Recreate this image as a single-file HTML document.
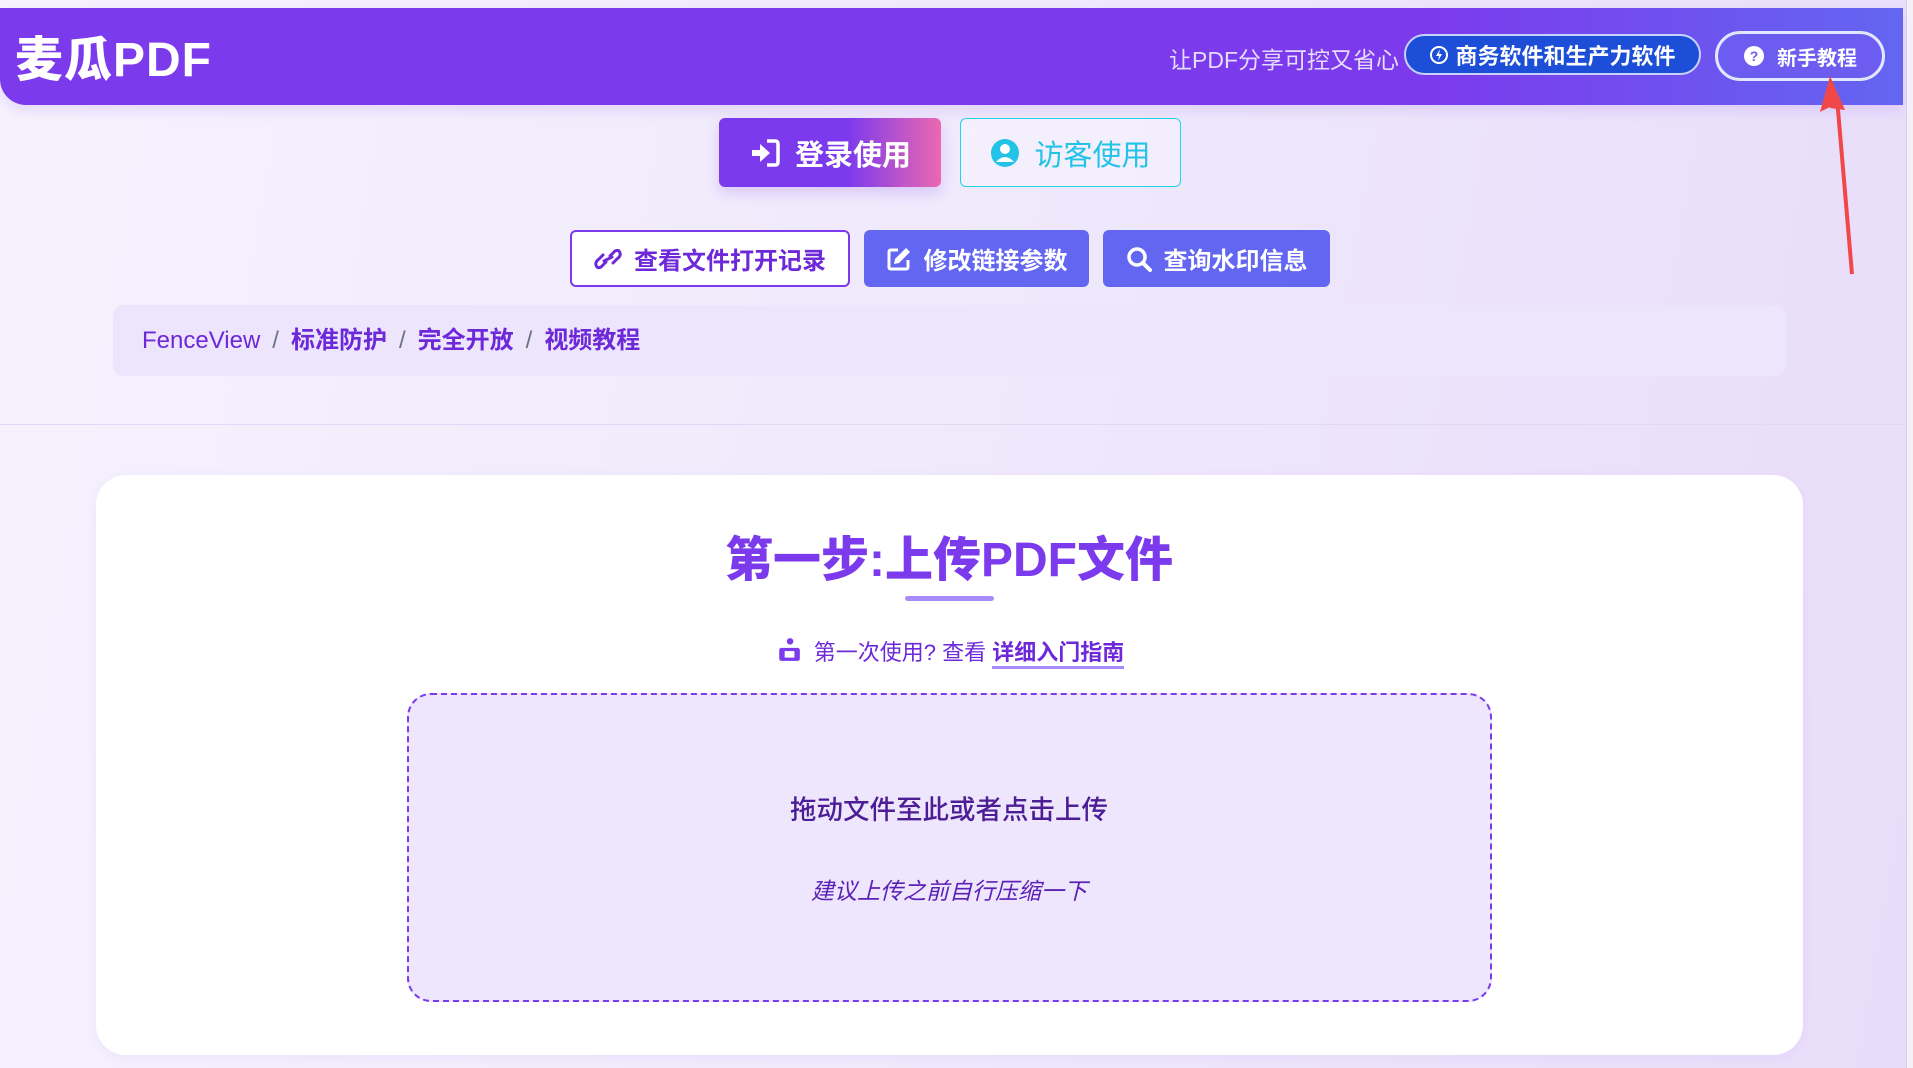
<!DOCTYPE html>
<html><head><meta charset="utf-8"><style>
*{margin:0;padding:0;box-sizing:border-box}
body{width:1913px;height:1068px;overflow:hidden;font-family:"Liberation Sans","Noto Sans CJK SC",sans-serif;background:linear-gradient(100deg,#f6f2fd 0%,#efe9fc 50%,#e9dcfa 100%);position:relative}
.hdr{position:absolute;left:0;top:8px;width:1903px;height:97px;border-radius:0 0 0 26px;background:linear-gradient(90deg,#7c3aed 0%,#7c3aed 75%,#6366f1 100%);box-shadow:0 6px 12px rgba(124,58,237,.12)}
.logo{position:absolute;left:15px;top:12px;color:#fff;font-size:48px;font-weight:900;letter-spacing:1px}
.slogan{position:absolute;left:1169px;top:33px;color:#e5dcfd;font-size:23px}
.b1{position:absolute;left:1404px;top:26px;width:297px;height:41px;border-radius:21px;background:#1d4ed8;border:2px solid #c7d2fe;color:#fff;font-size:22px;font-weight:bold;display:flex;align-items:center;justify-content:center;gap:6px}
.b2{position:absolute;left:1715px;top:23px;width:170px;height:50px;border-radius:25px;background:#6d5cf0;border:3px solid #e0e7ff;color:#fff;font-size:20px;font-weight:bold;display:flex;align-items:center;justify-content:center;gap:12px}
.btn{position:absolute;display:flex;align-items:center;justify-content:center;gap:14px;font-weight:bold;border-radius:6px}
.login{left:719px;top:118px;width:222px;height:69px;background:linear-gradient(90deg,#7c3aed 0%,#7c3aed 58%,#ec68b0 100%);color:#fff;font-size:29px;box-shadow:0 6px 14px rgba(124,58,237,.2)}
.visit{left:960px;top:118px;width:221px;height:69px;border:1.5px solid #22d3ee;color:#22c3e6;font-size:29px;font-weight:normal;background:rgba(255,255,255,.3)}
.r2{top:230px;height:57px;font-size:23px;color:#fff;background:#6366f1;gap:12px}
.crumb{position:absolute;left:113px;top:305px;width:1673px;height:71px;border-radius:10px;background:#ece5fb;font-size:24px;color:#6d28d9;padding-left:29px;line-height:71px}
.crumb span{color:#6b7280;margin:0 12px}
.crumb b{font-weight:600}
.line{position:absolute;left:0;top:424px;width:1906px;height:1px;background:#e2d8f6}
.card{position:absolute;left:96px;top:475px;width:1707px;height:580px;background:#fff;border-radius:30px;box-shadow:0 2px 10px rgba(124,58,237,.06)}
.title{position:absolute;left:0;width:1898px;top:520px;text-align:center;font-size:48px;font-weight:900;color:#7c3aed}
.bar{position:absolute;left:905px;top:596px;width:89px;height:5px;border-radius:3px;background:#a78bfa}
.hint{position:absolute;left:0;width:1900px;top:635px;text-align:center;font-size:22px;color:#6d28d9}
.hint a{font-weight:bold;color:#6d28d9;text-decoration:none;border-bottom:3px solid #a78bfa;padding-bottom:1px}
.drop{position:absolute;left:407px;top:693px;width:1085px;height:309px;border:2.5px dashed #7c3aed;border-radius:24px;background:#ede6fd}
.d1{position:absolute;left:0;width:1898px;top:788px;text-align:center;font-size:26.5px;color:#4c1d95;font-weight:500}
.d2{position:absolute;left:0;width:1898px;top:872px;text-align:center;font-size:23px;color:#5b21b6;font-style:italic}
.sb{position:absolute;left:1906px;top:0;width:7px;height:1068px;background:#f3f0fa;border-left:1px solid #d8d0e8}
</style></head><body>
<div class="hdr">
<div class="logo">麦瓜PDF</div>
<div class="slogan">让PDF分享可控又省心</div>
<div class="b1"><svg width="20" height="20" viewBox="0 0 20 20"><circle cx="10" cy="10" r="8" fill="none" stroke="#fff" stroke-width="2"/><path d="M11 4 L7 11 H10 L9 16 L13 9 H10 Z" fill="#fff"/></svg>商务软件和生产力软件</div>
<div class="b2"><svg width="22" height="22" viewBox="0 0 22 22"><circle cx="11" cy="11" r="10" fill="#fff"/><text x="11" y="16" text-anchor="middle" font-size="14" font-weight="bold" fill="#6d5cf0" font-family="Liberation Sans">?</text></svg>新手教程</div>
</div>
<svg style="position:absolute;left:1810px;top:68px" width="50" height="210"><path d="M42 206 L27 30" stroke="#f04848" stroke-width="4"/><path d="M20 8 L35 42 L20 40 Z" fill="#f04848"/><path d="M20 8 L10 44 L22 38 Z" fill="#f04848"/></svg>
<div class="btn login"><svg width="32" height="30" viewBox="0 0 32 30"><path d="M18 3 H26 Q29 3 29 6 V24 Q29 27 26 27 H18" fill="none" stroke="#fff" stroke-width="3.5"/><path d="M3 12 H11 V6 L21 15 L11 24 V18 H3 Z" fill="#fff"/></svg>登录使用</div>
<div class="btn visit"><svg width="30" height="30" viewBox="0 0 30 30"><circle cx="15" cy="15" r="14" fill="#22c3e6"/><circle cx="15" cy="11" r="5" fill="#fff"/><path d="M6 24 Q15 14 24 24" fill="#fff"/></svg>访客使用</div>
<div class="btn r2" style="left:570px;width:280px;background:#fff;border:2px solid #7c3aed;color:#6d28d9;font-size:24px"><svg width="28" height="22" viewBox="0 0 28 22"><path d="M12 14 L7 19 Q3 21 2 17 Q1 14 5 11 L9 7 M16 8 L21 3 Q25 1 26 5 Q27 8 23 11 L19 15 M10 13 L18 9" fill="none" stroke="#6d28d9" stroke-width="3" stroke-linecap="round"/></svg>查看文件打开记录</div>
<div class="btn r2" style="left:864px;width:225px;font-size:24px"><svg width="26" height="26" viewBox="0 0 26 26"><path d="M12 4 H5 Q3 4 3 6 V21 Q3 23 5 23 H20 Q22 23 22 21 V14" fill="none" stroke="#fff" stroke-width="3"/><path d="M20 2 L24 6 L13 17 L8 18 L9 13 Z" fill="#fff"/></svg>修改链接参数</div>
<div class="btn r2" style="left:1103px;width:227px;font-size:24px"><svg width="26" height="26" viewBox="0 0 26 26"><circle cx="11" cy="11" r="8" fill="none" stroke="#fff" stroke-width="3.5"/><path d="M17 17 L24 24" stroke="#fff" stroke-width="4" stroke-linecap="round"/></svg>查询水印信息</div>
<div class="crumb">FenceView<span>/</span><b>标准防护</b><span>/</span><b>完全开放</b><span>/</span><b>视频教程</b></div>
<div class="line"></div>
<div class="card"></div>
<div class="title">第一步:上传PDF文件</div>
<div class="bar"></div>
<div class="hint"><svg width="26" height="26" viewBox="0 0 24 24" style="vertical-align:-3px;margin-right:12px"><circle cx="13" cy="4" r="3" fill="#7c3aed"/><rect x="3" y="10" width="19" height="12" rx="2" fill="#7c3aed"/><rect x="8" y="13" width="9" height="6" fill="#fff"/></svg>第一次使用? 查看 <a>详细入门指南</a></div>
<div class="drop"></div>
<div class="d1">拖动文件至此或者点击上传</div>
<div class="d2">建议上传之前自行压缩一下</div>
<div class="sb"></div>
</body></html>
